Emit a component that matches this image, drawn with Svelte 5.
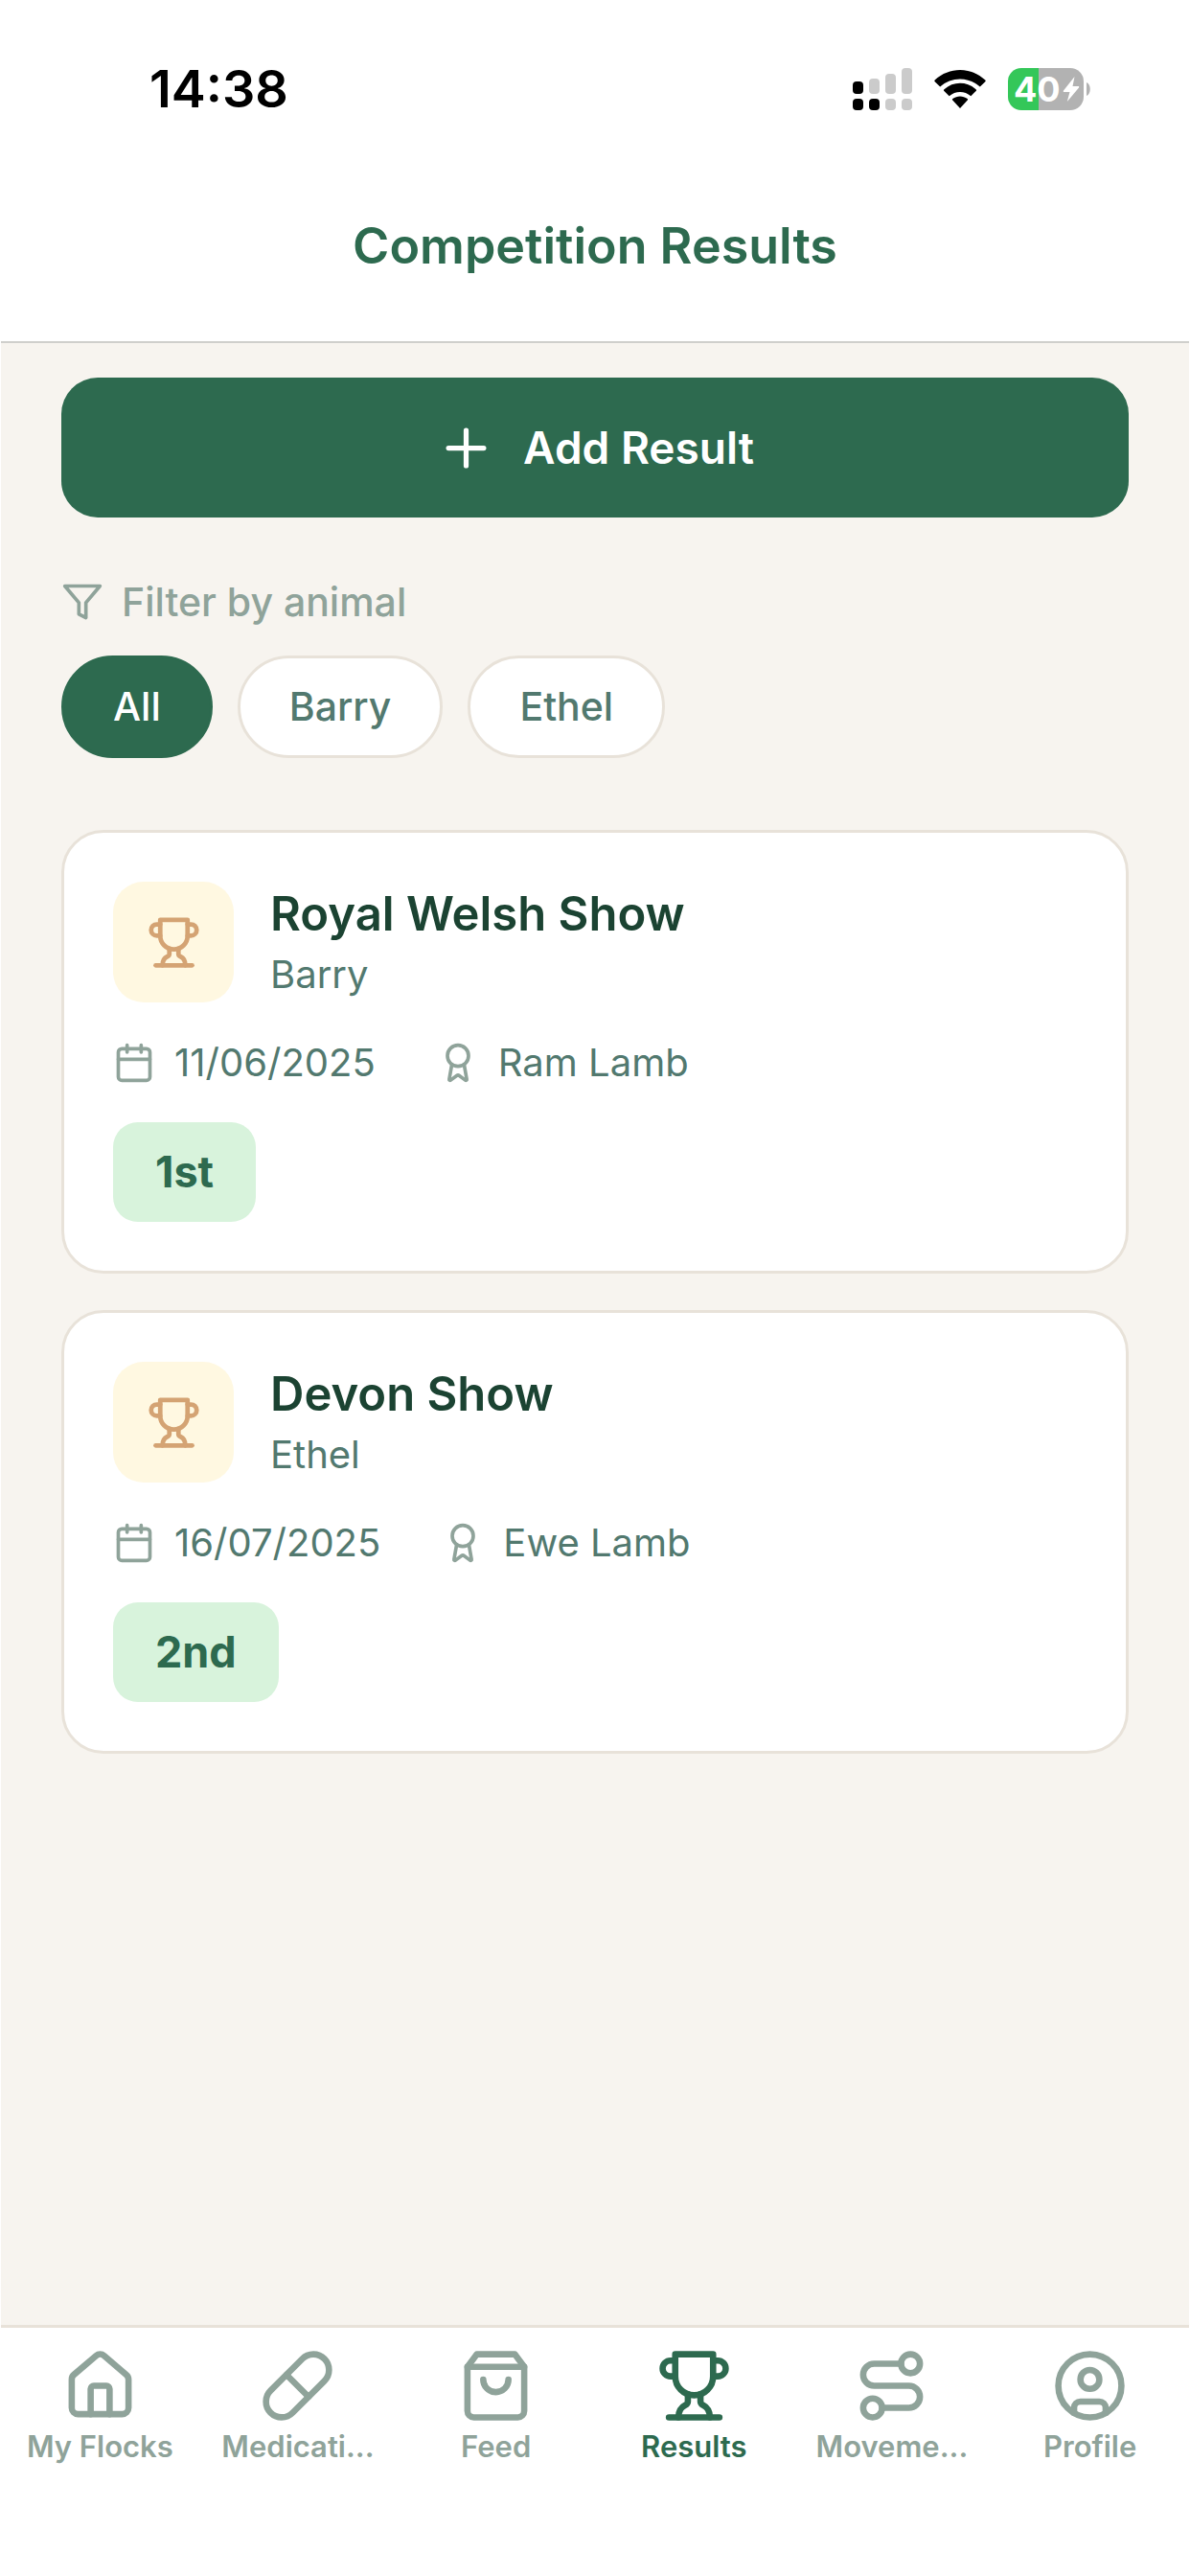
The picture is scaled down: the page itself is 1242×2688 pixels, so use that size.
<script lang="ts">
  const animals = ['All', 'Barry', 'Ethel'];
  let selected = $state('All');

  const results = [
    { show: 'Royal Welsh Show', animal: 'Barry', date: '11/06/2025', category: 'Ram Lamb', place: '1st' },
    { show: 'Devon Show', animal: 'Ethel', date: '16/07/2025', category: 'Ewe Lamb', place: '2nd' },
  ];

  const tabs = [
    { icon: 'house', label: 'My Flocks' },
    { icon: 'pill', label: 'Medicati...' },
    { icon: 'bag', label: 'Feed' },
    { icon: 'trophy', label: 'Results' },
    { icon: 'route', label: 'Moveme...' },
    { icon: 'user', label: 'Profile' },
  ];
  const current = 'Results';
</script>

{#snippet icon(name: string)}
  <svg class="icon {name}" viewBox="0 0 24 24" aria-hidden="true">
    {#if name === 'plus'}
      <path d="M5 12h14M12 5v14" />
    {:else if name === 'filter'}
      <path d="M22 3H2l8 9.46V19l4 2v-8.54L22 3Z" />
    {:else if name === 'trophy'}
      <path d="M6 9H4.5a2.5 2.5 0 0 1 0-5H6" />
      <path d="M18 9h1.5a2.5 2.5 0 0 0 0-5H18" />
      <path d="M4 22h16" />
      <path d="M10 14.66V17c0 .55-.47.98-.97 1.21C7.85 18.75 7 20.24 7 22" />
      <path d="M14 14.66V17c0 .55.47.98.97 1.21C16.15 18.75 17 20.24 17 22" />
      <path d="M18 2H6v7a6 6 0 0 0 12 0V2Z" />
    {:else if name === 'calendar'}
      <path d="M8 2v4M16 2v4M3 10h18" />
      <rect x="3" y="4" width="18" height="18" rx="2" />
    {:else if name === 'award'}
      <circle cx="12" cy="8" r="6" />
      <path d="m15.477 12.89 1.515 8.526a.5.5 0 0 1-.81.47l-3.58-2.687a1 1 0 0 0-1.197 0l-3.586 2.686a.5.5 0 0 1-.81-.469l1.514-8.526" />
    {:else if name === 'house'}
      <path d="M15 21v-8a1 1 0 0 0-1-1h-4a1 1 0 0 0-1 1v8" />
      <path d="M3 10a2 2 0 0 1 .709-1.528l7-5.999a2 2 0 0 1 2.582 0l7 5.999A2 2 0 0 1 21 10v9a2 2 0 0 1-2 2H5a2 2 0 0 1-2-2z" />
    {:else if name === 'pill'}
      <path d="m10.5 20.5 10-10a4.95 4.95 0 1 0-7-7l-10 10a4.95 4.95 0 1 0 7 7Z" />
      <path d="m8.5 8.5 7 7" />
    {:else if name === 'bag'}
      <path d="M6 2 3 6v14a2 2 0 0 0 2 2h14a2 2 0 0 0 2-2V6l-3-4Z" />
      <path d="M3 6h18M16 10a4 4 0 0 1-8 0" />
    {:else if name === 'route'}
      <circle cx="6" cy="19" r="3" />
      <path d="M9 19h8.5a3.5 3.5 0 0 0 0-7h-11a3.5 3.5 0 0 1 0-7H15" />
      <circle cx="18" cy="5" r="3" />
    {:else if name === 'user'}
      <circle cx="12" cy="12" r="10" />
      <circle cx="12" cy="10" r="3" />
      <path d="M7 20.662V19a2 2 0 0 1 2-2h6a2 2 0 0 1 2 2v1.662" />
    {/if}
  </svg>
{/snippet}

<div class="app">
  <div class="status">
    <time>14:38</time>
    <div class="indicators">
      <svg class="signal" viewBox="0 0 62 44" aria-hidden="true">
        <g fill="#cbcbcb">
          <rect x="17" y="11" width="11" height="16" rx="4" />
          <rect x="34" y="6" width="11" height="21" rx="4" />
          <rect x="51" y="0" width="11" height="27" rx="4" />
          <rect x="34" y="32" width="11" height="12" rx="4" />
          <rect x="51" y="32" width="11" height="12" rx="4" />
        </g>
        <rect x="0" y="14" width="11" height="13" rx="4" />
        <rect x="0" y="32" width="11" height="12" rx="4" />
        <rect x="17" y="32" width="11" height="12" rx="4" />
      </svg>
      <svg class="wifi" viewBox="0 0 54 40" aria-hidden="true">
        <path d="M27 40 19.2 31.6a1 1 0 0 1 .1-1.5c4.700-3.500 10.700-3.500 15.400 0a1 1 0 0 1 .1 1.500Z" />
        <path d="M15.700 27.300 10.400 22a1.200 1.200 0 0 1 0-1.700c9.600-8.600 23.600-8.600 33.200 0a1.200 1.200 0 0 1 0 1.700l-5.300 5.300c-6.500-5.900-16.100-5.900-22.600 0Z" />
        <path d="M6.200 17.600.7 12.200a1.200 1.200 0 0 1 0-1.700c15-14 37.600-14 52.600 0a1.200 1.200 0 0 1 0 1.700l-5.500 5.400c-11.600-10.900-30-10.900-41.600 0Z" />
      </svg>
      <div class="battery">
        <div class="cell">
          <span>40</span>
          <svg class="bolt" viewBox="0 0 18 28" aria-hidden="true">
            <path d="M12.500 1 1 15.500c-.6.800-.2 1.500.7 1.500H7.500L4.800 27 17 12.500c.6-.8.2-1.500-.7-1.500H10.500Z" />
          </svg>
        </div>
        <svg class="nub" viewBox="0 0 4 14" aria-hidden="true"><path d="M0 0c5 2 5 12 0 14Z" /></svg>
      </div>
    </div>
  </div>

  <header>
    <h1>Competition Results</h1>
  </header>

  <main>
    <button class="add" type="button">
      {@render icon('plus')}
      <span>Add Result</span>
    </button>

    <div class="filter-label" id="filter-label">
      {@render icon('filter')}
      <span>Filter by animal</span>
    </div>
    <div class="chips" role="group" aria-labelledby="filter-label">
      {#each animals as animal}
        <button
          type="button"
          class="chip"
          class:active={animal === selected}
          aria-pressed={animal === selected}
          onclick={() => (selected = animal)}>{animal}</button>
      {/each}
    </div>

    <div class="list">
      {#each results as r}
        <article class="card">
          <div class="top">
            <div class="badge-icon">{@render icon('trophy')}</div>
            <div class="names">
              <h2>{r.show}</h2>
              <p>{r.animal}</p>
            </div>
          </div>
          <div class="meta">
            <div class="meta-item">{@render icon('calendar')}<span>{r.date}</span></div>
            <div class="meta-item">{@render icon('award')}<span>{r.category}</span></div>
          </div>
          <div class="place">{r.place}</div>
        </article>
      {/each}
    </div>
  </main>

  <nav>
    {#each tabs as tab}
      <a href="#{tab.icon}" class:current={tab.label === current}>
        {@render icon(tab.icon)}
        <span>{tab.label}</span>
      </a>
    {/each}
  </nav>
</div>

<style>
  :global(body) {
    margin: 0;
    background: #fff;
  }
  .app {
    box-sizing: border-box;
    min-height: 100vh;
    display: flex;
    flex-direction: column;
    background: #fff;
    padding: 0 1px;
    font-family: Inter, 'Liberation Sans', sans-serif;
    font-optical-sizing: none;
    color: #52796f;
  }
  h1, h2, p {
    margin: 0;
  }
  button {
    font: inherit;
    cursor: pointer;
  }
  .icon {
    display: block;
    flex: none;
    width: 44px;
    height: 44px;
    fill: none;
    stroke: currentColor;
    stroke-width: 2;
    stroke-linecap: round;
    stroke-linejoin: round;
  }

  .status {
    box-sizing: border-box;
    height: 158px;
    padding: 27px 103px 0 155px;
    display: flex;
    align-items: center;
    justify-content: space-between;
    color: #000;
  }
  time {
    font-size: 54px;
    font-weight: 600;
    line-height: 64px;
  }
  .indicators {
    display: flex;
    align-items: center;
    gap: 23px;
  }
  .signal {
    width: 62px;
    height: 44px;
  }
  .wifi {
    width: 54px;
    height: 40px;
  }
  .battery {
    display: flex;
    align-items: center;
    gap: 3px;
  }
  .cell {
    box-sizing: border-box;
    width: 79px;
    height: 44px;
    padding: 0 4px 0 6px;
    border-radius: 14px;
    display: flex;
    align-items: center;
    justify-content: space-between;
    background: linear-gradient(90deg, #34c759 40%, #b2b2b2 40%);
    color: #fff;
    font-size: 36px;
    font-weight: 700;
    line-height: 44px;
  }
  .bolt {
    width: 18px;
    height: 28px;
    fill: #fff;
  }
  .nub {
    width: 4px;
    height: 14px;
    fill: #b2b2b2;
  }

  header {
    height: 198px;
    display: flex;
    align-items: center;
    justify-content: center;
    border-bottom: 2px solid #cfcfcc;
  }
  h1 {
    font-size: 52px;
    line-height: 64px;
    font-weight: 600;
    color: #2d6a4f;
  }

  main {
    flex: 1;
    padding: 36px 63px;
    background: #f7f4ef;
  }
  .add {
    width: 100%;
    height: 146px;
    display: flex;
    align-items: center;
    justify-content: center;
    gap: 28px;
    border: 0;
    border-radius: 38px;
    background: #2d6a4f;
    color: #fff;
    font-size: 46px;
    font-weight: 600;
  }
  .plus {
    width: 63px;
    height: 63px;
  }
  .filter-label {
    margin-top: 63px;
    display: flex;
    align-items: center;
    gap: 19px;
    line-height: 50px;
    font-size: 41px;
    font-weight: 500;
    color: #8fa39a;
  }
  .chips {
    margin-top: 31px;
    display: flex;
    gap: 26px;
  }
  .chip {
    padding: 0 51px;
    border: 3px solid #e8e2d9;
    border-radius: 54px;
    background: #fff;
    color: #52796f;
    font-size: 41px;
    font-weight: 500;
    line-height: 101px;
  }
  .chip.active {
    background: #2d6a4f;
    border-color: #2d6a4f;
    color: #fff;
  }

  .list {
    margin-top: 75px;
    display: flex;
    flex-direction: column;
    gap: 38px;
  }
  .card {
    padding: 51px;
    border: 3px solid #e8e2d9;
    border-radius: 44px;
    background: #fff;
  }
  .top {
    display: flex;
    align-items: center;
    gap: 38px;
  }
  .badge-icon {
    width: 126px;
    height: 126px;
    display: grid;
    place-items: center;
    border-radius: 32px;
    background: #fff8e1;
    color: #d4a373;
  }
  .badge-icon :global(.trophy) {
    width: 57px;
    height: 57px;
  }
  h2 {
    font-size: 49px;
    line-height: 60px;
    font-weight: 600;
    color: #1b4332;
  }
  p {
    margin-top: 8px;
    font-size: 40px;
    line-height: 50px;
  }
  .meta {
    margin-top: 38px;
    display: flex;
    gap: 64px;
  }
  .meta-item {
    display: flex;
    align-items: center;
    gap: 20px;
    font-size: 40px;
    line-height: 50px;
  }
  .meta-item .icon {
    color: #8fa39a;
  }
  .place {
    width: fit-content;
    margin-top: 37px;
    padding: 0 44px;
    border-radius: 26px;
    background: #d8f3dc;
    color: #2d6a4f;
    font-size: 45px;
    font-weight: 700;
    line-height: 104px;
  }

  nav {
    box-sizing: border-box;
    height: 262px;
    padding-top: 21px;
    display: grid;
    grid-template-columns: repeat(6, 1fr);
    border-top: 3px solid #e8e2d9;
  }
  nav a {
    display: flex;
    flex-direction: column;
    align-items: center;
    gap: 4px;
    color: #8fa39a;
    text-decoration: none;
    font-size: 31px;
    font-weight: 600;
    line-height: 40px;
    white-space: nowrap;
  }
  nav a.current {
    color: #2d6a4f;
  }
  nav .icon {
    width: 79px;
    height: 79px;
  }
</style>
